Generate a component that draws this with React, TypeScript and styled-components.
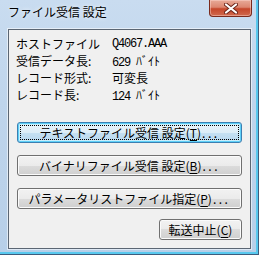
import React from "react"
import styled, { createGlobalStyle, css } from "styled-components"

const GlobalStyle = createGlobalStyle`
  html, body {
    margin: 0;
    padding: 0;
    background: #ffffff;
  }
  body {
    width: 259px;
    height: 255px;
    overflow: hidden;
    font-family: "Noto Sans CJK JP", sans-serif;
  }
`

type Info = { label: string; value: string; unit?: string }

const infoRows: Array<Info> = [
  { label: "ホストファイル", value: "Q4067.AAA" },
  { label: "受信データ長:", value: "629 ", unit: "ﾊﾞｲﾄ" },
  { label: "レコード形式:", value: "", unit: "可変長" },
  { label: "レコード長:", value: "124 ", unit: "ﾊﾞｲﾄ" },
]

const CloseIcon: React.FC = () => (
  <svg width="14" height="11" viewBox="0 0 14 11">
    <path d="M2 1.5 L12 9.5 M12 1.5 L2 9.5" stroke="#6b2418" strokeWidth="4" strokeLinecap="round" />
    <path d="M2 1.5 L12 9.5 M12 1.5 L2 9.5" stroke="#ffffff" strokeWidth="2.2" strokeLinecap="round" />
  </svg>
)

export default function App() {
  return (
    <>
      <GlobalStyle />
      <S.Window>
        <S.TitleBar>
          <S.Title>ファイル受信 設定</S.Title>
          <S.CloseButton>
            <CloseIcon />
          </S.CloseButton>
        </S.TitleBar>
        <S.Client>
          <S.InfoGrid>
            {infoRows.map((row) => (
              <React.Fragment key={row.label}>
                <S.Label>{row.label}</S.Label>
                <S.Value>
                  {row.value}
                  {row.unit && <S.Unit>{row.unit}</S.Unit>}
                </S.Value>
              </React.Fragment>
            ))}
          </S.InfoGrid>
          <S.ButtonStack>
            <S.Button $focused>
              テキストファイル受信 設定(<u>T</u>)<S.Dots>...</S.Dots>
            </S.Button>
            <S.Button>
              バイナリファイル受信 設定(<u>B</u>)<S.Dots>...</S.Dots>
            </S.Button>
            <S.Button>
              パラメータリストファイル指定(<u>P</u>)<S.Dots>...</S.Dots>
            </S.Button>
            <S.Button $compact>
              転送中止(<u>C</u>)
            </S.Button>
          </S.ButtonStack>
        </S.Client>
      </S.Window>
    </>
  )
}

const S = {
  Window: styled.div`
    width: 259px;
    height: 255px;
    box-sizing: border-box;
    display: flex;
    flex-direction: column;
    padding: 0 5px 5px 8px;
    background: linear-gradient(180deg, #c9dcf0 0%, #bfd5ec 40%, #b7cfe8 100%);
    border-right: 1px solid #3e5c7c;
    border-bottom: 1px solid #3e5c7c;
    box-shadow: inset -2px -2px 0 #58c8ee;
  `,
  TitleBar: styled.div`
    height: 29px;
    display: flex;
    justify-content: space-between;
    align-items: flex-start;
  `,
  Title: styled.div`
    padding-top: 4px;
    font-size: 12px;
    line-height: 16px;
    color: #000000;
    text-shadow: 0 0 4px rgba(255, 255, 255, 0.9);
  `,
  CloseButton: styled.div`
    width: 43px;
    height: 17px;
    margin-right: 1px;
    box-sizing: border-box;
    display: flex;
    align-items: center;
    justify-content: center;
    border: 1px solid #7a2a1c;
    border-top: none;
    border-radius: 0 0 4px 4px;
    background: linear-gradient(180deg, #e8aa98 0%, #dc8670 45%, #c5462a 55%, #d06a4e 100%);
    box-shadow: inset 0 0 0 1px rgba(255, 220, 210, 0.45);
  `,
  Client: styled.div`
    flex: 1;
    display: flex;
    flex-direction: column;
    box-sizing: border-box;
    margin-right: 2px;
    padding: 6px 7px 8px 7px;
    background: #f0f0f0;
    border: 1px solid #5b6673;
    box-shadow: 0 0 0 1px rgba(255, 255, 255, 0.55);
  `,
  InfoGrid: styled.div`
    display: grid;
    grid-template-columns: 96px 1fr;
    grid-auto-rows: 16px;
    row-gap: 1px;
    font-size: 12px;
    line-height: 16px;
    color: #000000;
  `,
  Label: styled.div`
    white-space: nowrap;
  `,
  Value: styled.div`
    white-space: pre;
    font-family: "Liberation Mono", "Noto Sans CJK JP", monospace;
    letter-spacing: -1.2px;
  `,
  Unit: styled.span`
    font-family: "Noto Sans CJK JP", sans-serif;
    letter-spacing: 0;
  `,
  ButtonStack: styled.div`
    display: flex;
    flex-direction: column;
    gap: 12px;
    margin-top: 19px;
    padding: 0 1px;
  `,
  Button: styled.div<{ $focused?: boolean; $compact?: boolean }>`
    position: relative;
    height: 21px;
    box-sizing: border-box;
    display: flex;
    align-items: center;
    justify-content: center;
    font-size: 12px;
    line-height: 16px;
    color: #000000;
    white-space: nowrap;
    border: 1px solid #707070;
    border-radius: 3px;
    background: linear-gradient(180deg, #f2f2f2 0%, #ebebeb 50%, #dcdcdc 50%, #cfcfcf 100%);
    box-shadow: inset 0 0 0 1px #fbfbfb;

    u {
      text-decoration-thickness: 1px;
      text-underline-offset: 2px;
    }

    ${(p) =>
      p.$focused &&
      css`
        border-color: #3c7fb1;
        background: linear-gradient(180deg, #eaf4fa 0%, #dcedf7 50%, #c6e1f2 50%, #b6d7ee 100%);
        box-shadow: inset 0 0 0 1px #5ed0f8, inset 0 0 0 2px #c8eefc;
        &::after {
          content: "";
          position: absolute;
          inset: 2px;
          border: 1px dotted #000000;
        }
      `}

    ${(p) =>
      p.$compact &&
      css`
        width: 83px;
        align-self: flex-end;
        margin-top: -2px;
      `}
  `,
  Dots: styled.span`
    letter-spacing: 2.5px;
    margin-left: 1px;
  `,
}
